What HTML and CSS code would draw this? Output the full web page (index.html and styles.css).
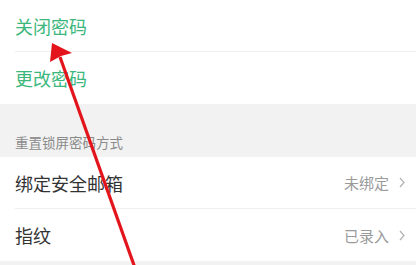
FILE: index.html
```html
<!DOCTYPE html>
<html lang="zh">
<head>
<meta charset="utf-8">
<link rel="stylesheet" href="styles.css">
</head>
<body>
<div class="page">
  <div class="group">
    <div class="row green divided"><span class="label">关闭密码</span></div>
    <div class="row green"><span class="label">更改密码</span></div>
  </div>
  <div class="section-header">重置锁屏密码方式</div>
  <div class="group">
    <div class="row divided">
      <span class="label">绑定安全邮箱</span>
      <span class="value">未绑定<svg class="chev" width="6" height="11" viewBox="0 0 6 11"><path d="M1 1 L5 5.5 L1 10" fill="none" stroke="#b0b0b0" stroke-width="1.2"/></svg></span>
    </div>
    <div class="row">
      <span class="label">指纹</span>
      <span class="value">已录入<svg class="chev" width="6" height="11" viewBox="0 0 6 11"><path d="M1 1 L5 5.5 L1 10" fill="none" stroke="#b0b0b0" stroke-width="1.2"/></svg></span>
    </div>
  </div>
  <div class="footer"></div>
  <svg class="arrow" width="416" height="265" viewBox="0 0 416 265">
    <line x1="60" y1="57" x2="135" y2="268" stroke="#e3141b" stroke-width="3.2"/>
    <polygon points="52,43 72,53 61,56 50,62" fill="#e3141b"/>
  </svg>
</div>
</body>
</html>
```
FILE: styles.css
```css
html, body {
  margin: 0;
  padding: 0;
  background: #ffffff;
}
.page {
  position: relative;
  width: 416px;
  height: 265px;
  overflow: hidden;
  font-family: "Noto Sans CJK SC", "Noto Sans", sans-serif;
  background: #f2f2f2;
}
.group {
  background: #ffffff;
  padding-left: 15px;
}
.row {
  height: 52px;
  display: flex;
  align-items: center;
  justify-content: space-between;
  padding-right: 11px;
  box-sizing: border-box;
}
.row.divided {
  border-bottom: 1px solid #efefef;
}
.label {
  font-size: 18px;
  color: #333333;
}
.green .label {
  color: #3cb77c;
}
.value {
  display: flex;
  align-items: center;
  font-size: 15px;
  color: #9a9a9a;
}
.chev {
  margin-left: 10px;
}
.section-header {
  height: 53px;
  box-sizing: border-box;
  padding: 30px 0 0 15px;
  font-size: 13.5px;
  line-height: 16px;
  color: #8a8a8a;
}
.footer {
  height: 10px;
}
.arrow {
  position: absolute;
  left: 0;
  top: 0;
}
```
